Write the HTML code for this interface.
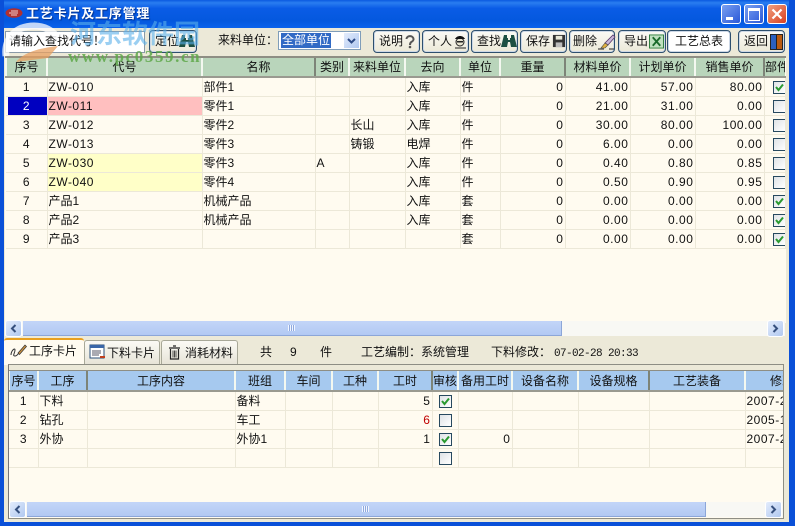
<!DOCTYPE html>
<html><head><meta charset="utf-8"><style>
html,body{margin:0;padding:0}
body{width:795px;height:526px;overflow:hidden;position:relative;background:#ece9d8;font:12px/19px "Liberation Sans","WenQuanYi Zen Hei","Noto Sans CJK SC",sans-serif;color:#111}
.a{position:absolute}
table{border-collapse:collapse;table-layout:fixed;position:absolute;left:0;top:0}
td,th{padding:0 1px;height:18px;border:1px solid #ece8d8;border-width:0 1px 1px 0;white-space:nowrap;overflow:hidden;font-weight:normal;font-size:12px;line-height:18px;text-align:left}
th{text-align:center;height:19px;border:0;border-left:2px solid #f4f8f0;border-bottom:2px solid #9a9a90;padding:0}
#g1 th{background:#b9d5bb}#g2 th{background:#a6c9ef}
th.d{border-left:2px solid #7d8478 !important}
td.r{text-align:right;padding-right:1px;letter-spacing:.55px}td.n{text-align:center}td.l{letter-spacing:.5px}
i.c{display:block;width:11px;height:11px;border:1px solid #27495f;background:linear-gradient(135deg,#dfe3e6,#fff);margin:0 auto;position:relative}
i.c svg{position:absolute;left:1px;top:1px}
.b{position:absolute;top:30px;height:21px;border:1px solid #2d4f6e;border-radius:4px;background:linear-gradient(#fbfaf5,#ece9d8);box-shadow:inset 0 0 0 1px #cdd8e6;font-size:12px;line-height:21px;padding-left:5px;box-sizing:content-box;white-space:nowrap}
.b svg{position:absolute;top:3px}
.tab{position:absolute;background:linear-gradient(#fbfaf5,#e6e3d6);border:1px solid #a8a898;border-bottom:0;border-radius:3px 3px 0 0;font-size:12px;line-height:24px;white-space:nowrap}
.sb{position:absolute;height:15px;background:#f8f8f4}
.btn{position:absolute;top:0;width:15px;height:15px;background:linear-gradient(135deg,#e3ecfc,#b0c8f0);border:0;border-radius:2px;box-shadow:0 0 0 1px #fff}
.th{position:absolute;top:0;height:14px;background:linear-gradient(#c3d5f8,#b2c9f3);border-right:1px solid #8ca6d8;border-bottom:1px solid #8ca6d8}
.grip{position:absolute;top:4px;width:7px;height:6px;background:repeating-linear-gradient(90deg,#f2f6ff 0 1px,#8fa9de 1px 2px)}
.wb{position:absolute;top:4px;height:20px;border:1px solid #fff;border-radius:3px;box-sizing:border-box}
</style></head><body>

<!-- window frame -->
<div class="a" style="left:0;top:0;width:795px;height:28px;background:linear-gradient(#0a5ae0 0,#2a7df0 10%,#0a5ce6 30%,#0458de 75%,#0a62ec 100%)"></div>
<div class="a" style="left:0;top:0;width:4px;height:526px;background:#0a50d8"></div>
<div class="a" style="left:789px;top:0;width:6px;height:526px;background:#0a50d8"></div>
<div class="a" style="left:0;top:522px;width:795px;height:4px;background:#0a50d8"></div>

<svg class="a" style="left:4px;top:7px" width="20" height="12" viewBox="0 0 20 12"><ellipse cx="10" cy="6" rx="8.5" ry="4.8" fill="#b03030"/><path d="M5 6h9M7 4h7M7 8h6" stroke="#f0d0d0" stroke-width="1"/></svg>
<div class="a" style="left:26px;top:5px;color:#fff;font-size:13px;font-weight:bold;line-height:18px;letter-spacing:.8px;text-shadow:1px 1px 1px #03318c">工艺卡片及工序管理</div>

<!-- window buttons -->
<div class="wb" style="left:721px;width:20px;background:linear-gradient(135deg,#7aa0f0,#2a58d8)"><div class="a" style="left:4px;top:12px;width:7px;height:3px;background:#fff"></div></div>
<div class="wb" style="left:744px;width:20px;background:linear-gradient(135deg,#7aa0f0,#2a58d8)"><div class="a" style="left:3px;top:3px;width:10px;height:9px;border:1px solid #fff;border-top:3px solid #fff"></div></div>
<div class="wb" style="left:767px;width:20px;background:linear-gradient(135deg,#f0a080,#d84020)"><svg class="a" style="left:3px;top:3px" width="12" height="12"><path d="M1.5 1.5l9 9M10.5 1.5l-9 9" stroke="#fff" stroke-width="2.2"/></svg></div>

<!-- toolbar -->
<div class="a" style="left:4px;top:28px;width:785px;height:30px;background:#ece9d8"></div>
<div class="a" style="left:5px;top:31px;height:20px;background:#fff;border:1px solid #8a9aa8;font-size:12px;line-height:19px;padding-left:3px;box-sizing:content-box;white-space:nowrap;overflow:hidden;width:135px">请输入查找代号！</div>
<div class="b" style="left:149px;width:41px">定位<svg style="left:28px" width="18" height="15" viewBox="0 0 18 15"><path d="M4 1h3v3h1v2h2V4h1V1h3l3 12h-6l-1-5H8l-1 5H1z" fill="#1d4f42"/></svg></div>
<div class="a" style="left:218px;top:31px;font-size:12px;line-height:19px">来料单位：</div>
<div class="a" style="left:278px;top:31px;width:81px;height:17px;background:#fff;border:1px solid #7f9db9"><span class="a" style="left:2px;top:1px;height:15px;line-height:15px;background:#316ac5;color:#fff;font-size:12px;padding:0 1px;white-space:nowrap">全部单位</span><div class="a" style="right:1px;top:1px;width:15px;height:15px;background:linear-gradient(135deg,#e3ecfc,#b0c8f0)"><svg class="a" style="left:2px;top:4px" width="11" height="8"><path d="M2 2l3.500 3.500L9 2" stroke="#2c4a86" stroke-width="2" fill="none"/></svg></div></div>

<div class="b" style="left:373px;width:40px">说明<svg style="left:30px" width="12" height="15" viewBox="0 0 12 15"><path d="M2.500 5a3.500 3 0 1 1 5 2.800C6.200 8.700 6 9.500 6 11" stroke="#555" stroke-width="2" fill="none"/><circle cx="6" cy="13" r="1.300" fill="#555"/></svg></div>
<div class="b" style="left:422px;width:40px">个人<svg style="left:29px" width="16" height="15" viewBox="0 0 16 15"><circle cx="8" cy="8" r="4" fill="#e8e4d0" stroke="#222"/><path d="M3 5c2-4 8-4 10 0z" fill="#111"/><path d="M5 7h6v1.500H5z" fill="#222"/><path d="M3 14h11" stroke="#222"/></svg></div>
<div class="b" style="left:471px;width:40px">查找<svg style="left:28px" width="18" height="15" viewBox="0 0 18 15"><path d="M4 1h3v3h1v2h2V4h1V1h3l3 12h-6l-1-5H8l-1 5H1z" fill="#1d4f42"/></svg></div>
<div class="b" style="left:520px;width:40px">保存<svg style="left:31px" width="14" height="14" viewBox="0 0 15 15"><path d="M1 1h13v13H1z" fill="#333"/><path d="M4 2h7v4H4z" fill="#e8e8d8"/><path d="M4 9h7v5H4z" fill="#bbb"/></svg></div>
<div class="b" style="left:569px;width:41px;padding-left:3px">删除<svg style="left:28px" width="18" height="16" viewBox="0 0 18 16"><path d="M15 1l2 2-7 8-3-2z" fill="#c8b8d8" stroke="#5a3a6a" stroke-width=".8"/><path d="M7 9l3 2-3 3-4 0z" fill="#e0b040" stroke="#444" stroke-width=".6"/><path d="M0 15h6M11 15h5" stroke="#222"/></svg></div>
<div class="b" style="left:618px;width:41px">导出<svg style="left:30px" width="15" height="15" viewBox="0 0 16 15"><path d="M.5.5h15v14H.5z" fill="#bfe0bf" stroke="#2a7a3a"/><path d="M4 3l8 9M12 3l-8 9" stroke="#1a6a2a" stroke-width="2"/></svg></div>
<div class="b" style="left:667px;background:#fff;padding-left:7px;width:55px">工艺总表</div>
<div class="b" style="left:738px;width:40px">返回<svg style="left:31px" width="13" height="16" viewBox="0 0 13 16"><path d="M0 0h13v16H0z" fill="#222"/><path d="M1 1h5v14H1z" fill="#2a60c0"/><path d="M7 1h5v14H7z" fill="#b85a10"/></svg></div>

<!-- upper grid -->
<div class="a" style="left:5px;top:56px;width:781px;height:265px;background:#fffbf0;border-top:2px solid #8e8e84;overflow:hidden" id="w1">
<table id="g1" style="left:0;top:-1px;width:779px">
<colgroup><col style="width:41px"><col style="width:155px"><col style="width:113px"><col style="width:34px"><col style="width:56px"><col style="width:55px"><col style="width:40px"><col style="width:65px"><col style="width:65px"><col style="width:65px"><col style="width:69px"><col style="width:21px"></colgroup>
<tr><th>序号</th><th>代号</th><th>名称</th><th class="d">类别</th><th>来料单位</th><th>去向</th><th>单位</th><th>重量</th><th class="d">材料单价</th><th>计划单价</th><th>销售单价</th><th class="d" style="text-align:left">部件</th></tr>
<tr><td class="n">1</td><td class="l">ZW-010</td><td>部件1</td><td></td><td></td><td>入库</td><td>件</td><td class="r">0</td><td class="r">41.00</td><td class="r">57.00</td><td class="r">80.00</td><td><i class="c" style="margin-left:7px"><svg width="9" height="9"><path d="M1 4l2.500 3L8 1.500" stroke="#2a9a30" stroke-width="2" fill="none"/></svg></i></td></tr>
<tr><td class="n" style="background:#0000c0;color:#fff;box-shadow:inset 2px 0 #fffbf0">2</td><td class="l" style="background:#ffbfbf">ZW-011</td><td>零件1</td><td></td><td></td><td>入库</td><td>件</td><td class="r">0</td><td class="r">21.00</td><td class="r">31.00</td><td class="r">0.00</td><td><i class="c" style="margin-left:7px"></i></td></tr>
<tr><td class="n">3</td><td class="l">ZW-012</td><td>零件2</td><td></td><td>长山</td><td>入库</td><td>件</td><td class="r">0</td><td class="r">30.00</td><td class="r">80.00</td><td class="r">100.00</td><td><i class="c" style="margin-left:7px"></i></td></tr>
<tr><td class="n">4</td><td class="l">ZW-013</td><td>零件3</td><td></td><td>铸锻</td><td>电焊</td><td>件</td><td class="r">0</td><td class="r">6.00</td><td class="r">0.00</td><td class="r">0.00</td><td><i class="c" style="margin-left:7px"></i></td></tr>
<tr><td class="n">5</td><td class="l" style="background:#ffffc8">ZW-030</td><td>零件3</td><td>A</td><td></td><td>入库</td><td>件</td><td class="r">0</td><td class="r">0.40</td><td class="r">0.80</td><td class="r">0.85</td><td><i class="c" style="margin-left:7px"></i></td></tr>
<tr><td class="n">6</td><td class="l" style="background:#ffffc8">ZW-040</td><td>零件4</td><td></td><td></td><td>入库</td><td>件</td><td class="r">0</td><td class="r">0.50</td><td class="r">0.90</td><td class="r">0.95</td><td><i class="c" style="margin-left:7px"></i></td></tr>
<tr><td class="n">7</td><td>产品1</td><td>机械产品</td><td></td><td></td><td>入库</td><td>套</td><td class="r">0</td><td class="r">0.00</td><td class="r">0.00</td><td class="r">0.00</td><td><i class="c" style="margin-left:7px"><svg width="9" height="9"><path d="M1 4l2.500 3L8 1.500" stroke="#2a9a30" stroke-width="2" fill="none"/></svg></i></td></tr>
<tr><td class="n">8</td><td>产品2</td><td>机械产品</td><td></td><td></td><td>入库</td><td>套</td><td class="r">0</td><td class="r">0.00</td><td class="r">0.00</td><td class="r">0.00</td><td><i class="c" style="margin-left:7px"><svg width="9" height="9"><path d="M1 4l2.500 3L8 1.500" stroke="#2a9a30" stroke-width="2" fill="none"/></svg></i></td></tr>
<tr><td class="n">9</td><td>产品3</td><td></td><td></td><td></td><td></td><td>套</td><td class="r">0</td><td class="r">0.00</td><td class="r">0.00</td><td class="r">0.00</td><td><i class="c" style="margin-left:7px"><svg width="9" height="9"><path d="M1 4l2.500 3L8 1.500" stroke="#2a9a30" stroke-width="2" fill="none"/></svg></i></td></tr>
</table>
</div>

<!-- upper scrollbar -->
<div class="sb" style="left:5px;top:321px;width:780px"><div class="btn" style="left:1px"><svg class="a" style="left:3px;top:2px" width="9" height="11"><path d="M6.500 2L3 5.500 6.500 9" stroke="#36507e" stroke-width="2" fill="none"/></svg></div><div class="th" style="left:18px;width:538px"><div class="grip" style="left:265px"></div></div><div class="btn" style="left:763px"><svg class="a" style="left:3px;top:2px" width="9" height="11"><path d="M2.500 2L6 5.500 2.500 9" stroke="#36507e" stroke-width="2" fill="none"/></svg></div></div>

<!-- tabs -->
<div class="tab" style="left:84px;top:340px;width:74px;height:24px"><svg class="a" style="left:4px;top:3px" width="17" height="17" viewBox="0 0 17 17"><path d="M1 1h14v13H1z" fill="#fff" stroke="#2b4f7a"/><path d="M1 1h14v3H1z" fill="#3a66a8"/><path d="M3 7h9M3 9h9M3 11h7" stroke="#556"/><path d="M11 13l5 0" stroke="#c04020" stroke-width="2"/></svg><span class="a" style="left:22px;top:0">下料卡片</span></div>
<div class="tab" style="left:161px;top:340px;width:75px;height:24px"><svg class="a" style="left:6px;top:4px" width="13" height="15" viewBox="0 0 13 15"><path d="M1 3h11M5 1h3M2.500 4v10h8V4" stroke="#222" stroke-width="1.200" fill="none"/><path d="M5 5.500v7M6.500 5.500v7M8 5.500v7" stroke="#222" stroke-width=".8"/></svg><span class="a" style="left:23px;top:0">消耗材料</span></div>
<div class="a" style="left:4px;top:338px;width:80px;height:27px;background:#fffbf0;border-radius:3px 3px 0 0;border-top:2px solid #e8a020;box-sizing:border-box;font-size:12px;line-height:23px"><svg class="a" style="left:6px;top:3px" width="17" height="15" viewBox="0 0 17 15"><path d="M1 12C1 8 5 4 5 7S2 13 5 13c2 0 3-2 4-3" stroke="#333" fill="none"/><path d="M8 10l7-8 1.500 1.500-7 8z" fill="#c89040" stroke="#333" stroke-width=".7"/></svg><span class="a" style="left:25px;top:0;white-space:nowrap">工序卡片</span></div>

<div class="a" style="left:260px;top:343px;font-size:12px;line-height:19px">共</div>
<div class="a" style="left:290px;top:343px;font-size:12px;line-height:19px">9</div>
<div class="a" style="left:320px;top:343px;font-size:12px;line-height:19px">件</div>
<div class="a" style="left:361px;top:343px;font-size:12px;line-height:19px;white-space:nowrap">工艺编制：系统管理</div>
<div class="a" style="left:491px;top:343px;font-size:12px;line-height:19px;white-space:nowrap">下料修改：<span style="font-family:'Liberation Mono',monospace;font-size:11px;letter-spacing:-.6px;margin-left:3px">07-02-28 20:33</span></div>

<!-- lower grid -->
<div class="a" style="left:8px;top:364px;width:776px;height:155px;background:#fffbf0;border:1px solid #8e8e84;border-left:1px solid #777;box-sizing:border-box;overflow:hidden">
<div class="a" style="left:0;top:0;width:100%;height:5px;background:#ece9d8;border-bottom:1px solid #8e8e84"></div>
<table id="g2" style="left:-1px;top:6px;width:775px">
<colgroup><col style="width:29px"><col style="width:49px"><col style="width:148px"><col style="width:50px"><col style="width:47px"><col style="width:46px"><col style="width:54px"><col style="width:26px"><col style="width:54px"><col style="width:66px"><col style="width:71px"><col style="width:96px"><col style="width:39px"></colgroup>
<tr><th>序号</th><th>工序</th><th class="d">工序内容</th><th>班组</th><th>车间</th><th>工种</th><th>工时</th><th class="d">审核</th><th>备用工时</th><th>设备名称</th><th>设备规格</th><th class="d">工艺装备</th><th style="text-align:left;padding-left:24px">修改</th></tr>
<tr><td class="n">1</td><td>下料</td><td></td><td>备料</td><td></td><td></td><td class="r">5</td><td><i class="c" style="margin-left:5px"><svg width="9" height="9"><path d="M1 4l2.500 3L8 1.500" stroke="#2a9a30" stroke-width="2" fill="none"/></svg></i></td><td></td><td></td><td></td><td></td><td class="l">2007-2</td></tr>
<tr><td class="n">2</td><td>钻孔</td><td></td><td>车工</td><td></td><td></td><td class="r" style="color:#c00000">6</td><td><i class="c" style="margin-left:5px"></i></td><td></td><td></td><td></td><td></td><td class="l">2005-1</td></tr>
<tr><td class="n">3</td><td>外协</td><td></td><td>外协1</td><td></td><td></td><td class="r">1</td><td><i class="c" style="margin-left:5px"><svg width="9" height="9"><path d="M1 4l2.500 3L8 1.500" stroke="#2a9a30" stroke-width="2" fill="none"/></svg></i></td><td class="r">0</td><td></td><td></td><td></td><td class="l">2007-2</td></tr>
<tr><td></td><td></td><td></td><td></td><td></td><td></td><td></td><td><i class="c" style="margin-left:5px"></i></td><td></td><td></td><td></td><td></td><td></td></tr>
</table>
</div>

<!-- lower scrollbar -->
<div class="sb" style="left:9px;top:502px;width:774px"><div class="btn" style="left:1px"><svg class="a" style="left:3px;top:2px" width="9" height="11"><path d="M6.500 2L3 5.500 6.500 9" stroke="#36507e" stroke-width="2" fill="none"/></svg></div><div class="th" style="left:18px;width:678px"><div class="grip" style="left:335px"></div></div><div class="btn" style="left:757px"><svg class="a" style="left:3px;top:2px" width="9" height="11"><path d="M2.500 2L6 5.500 2.500 9" stroke="#36507e" stroke-width="2" fill="none"/></svg></div></div>

<!-- watermark -->
<svg class="a" style="left:2px;top:20px;opacity:.75" width="62" height="42" viewBox="0 0 62 42"><path d="M4 36C2 18 14 6 32 6c10 0 18 4 24 12" fill="none" stroke="#ffffff" stroke-width="7"/><path d="M14 42c8-10 24-14 42-16l-10 12z" fill="#e8a060"/></svg>
<div class="a" style="left:70px;top:17px;font-size:26px;line-height:34px;font-weight:bold;color:#5ab0ea;opacity:.6;white-space:nowrap">河东软件园</div>
<div class="a" style="left:68px;top:48px;font:bold 17px/18px 'Liberation Serif',serif;color:#5fa84a;opacity:.85;white-space:nowrap;letter-spacing:1.6px">www.pc0359.cn</div>
</body></html>
